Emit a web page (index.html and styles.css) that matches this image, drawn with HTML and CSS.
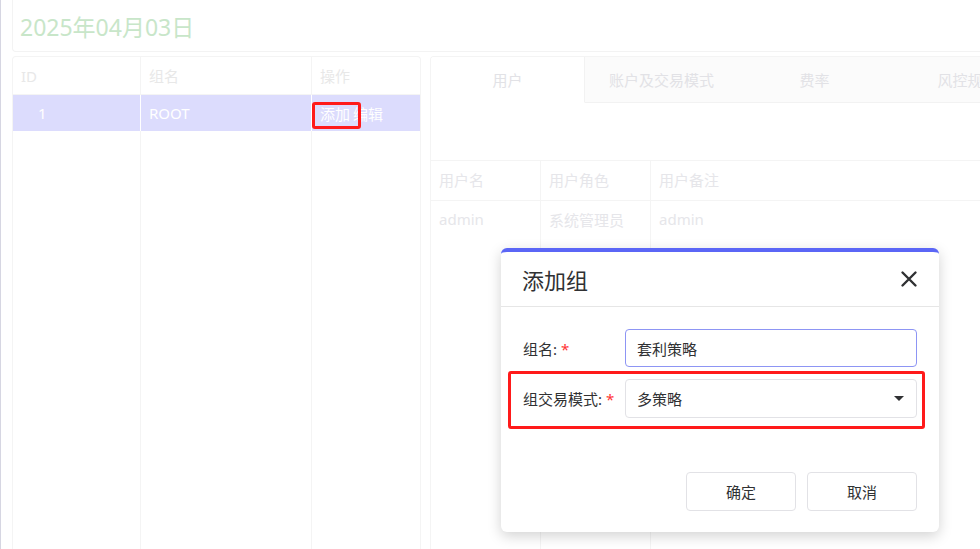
FILE: index.html
```html
<!DOCTYPE html>
<html>
<head>
    <meta charset="utf-8">
    <link rel="stylesheet" href="styles.css">
</head>
<body>
    <div class="page">
        <div class="date-card">2025年04月03日</div>

        <div class="panels">
            <div class="group-panel">
                <div class="grid-row grid-head">
                    <div class="cell cell-id">ID</div>
                    <div class="cell cell-name">组名</div>
                    <div class="cell cell-op">操作</div>
                </div>
                <div class="grid-row grid-selected">
                    <div class="cell cell-id cell-num">1</div>
                    <div class="cell cell-name">ROOT</div>
                    <div class="cell cell-op">
                        <span class="op-link">添加</span><span class="op-link">编辑</span>
                        <span class="mark mark-add"></span>
                    </div>
                </div>
                <div class="grid-row grid-fill">
                    <div class="cell cell-id"></div>
                    <div class="cell cell-name"></div>
                    <div class="cell cell-op"></div>
                </div>
            </div>

            <div class="detail-panel">
                <div class="tabs">
                    <div class="tab tab-active">用户</div>
                    <div class="tab">账户及交易模式</div>
                    <div class="tab">费率</div>
                    <div class="tab">风控规则</div>
                </div>
                <div class="tab-body">
                    <div class="user-row user-head">
                        <div class="ucell">用户名</div>
                        <div class="ucell">用户角色</div>
                        <div class="ucell ucell-last">用户备注</div>
                    </div>
                    <div class="user-row">
                        <div class="ucell">admin</div>
                        <div class="ucell">系统管理员</div>
                        <div class="ucell ucell-last">admin</div>
                    </div>
                    <div class="user-row user-fill">
                        <div class="ucell"></div>
                        <div class="ucell"></div>
                        <div class="ucell ucell-last"></div>
                    </div>
                </div>
            </div>
        </div>
    </div>

    <div class="modal">
        <div class="modal-header">
            <span class="modal-title">添加组</span>
            <svg class="modal-close" width="18" height="18" viewBox="0 0 18 18">
                <path d="M2.5 2.5 L15.5 15.5 M15.5 2.5 L2.5 15.5" stroke="#303133" stroke-width="2.4" stroke-linecap="round"/>
            </svg>
        </div>
        <div class="modal-body">
            <div class="form-row">
                <label class="form-label">组名: <span class="req">*</span></label>
                <div class="form-input form-input-focus">套利策略</div>
            </div>
            <div class="form-row">
                <label class="form-label">组交易模式: <span class="req">*</span></label>
                <div class="form-input form-select">
                    <span>多策略</span>
                    <span class="caret"></span>
                </div>
                <span class="mark mark-mode"></span>
            </div>
        </div>
        <div class="modal-footer">
            <button class="btn">确定</button>
            <button class="btn">取消</button>
        </div>
    </div>
</body>
</html>
```

FILE: styles.css
```css
html, body {
    height: 100%;
}

body {
    margin: 0;
    font-family: "Noto Sans", "Noto Sans CJK SC", sans-serif;
    font-size: 15px;
    background: #fff;
    border-left: 1px solid #d6d6e2;
    overflow: hidden;
    position: relative;
}

.page {
    padding-left: 11px;
    height: 100%;
    display: flex;
    flex-direction: column;
}

.date-card {
    height: 58px;
    flex-shrink: 0;
    margin-top: -6px;
    padding: 6px 0 0 7px;
    box-sizing: border-box;
    display: flex;
    align-items: center;
    font-size: 23px;
    color: #c8e6c9;
    border: 1px solid #f3f3f3;
    border-right: none;
    border-radius: 0 0 0 4px;
}

.panels {
    flex: 1;
    display: flex;
    gap: 9px;
    margin-top: 4px;
    min-height: 0;
}

/* left: group grid */
.group-panel {
    width: 409px;
    flex-shrink: 0;
    display: flex;
    flex-direction: column;
    border: 1px solid #f4f4f4;
    border-bottom: none;
    border-radius: 4px 4px 0 0;
    box-sizing: border-box;
}

.grid-row {
    display: flex;
}

.grid-head {
    height: 37px;
    color: #e8e8e8;
    border-bottom: 1px solid #f4f4f4;
}

.grid-selected {
    height: 36px;
    background: #dcdcfd;
    color: #fff;
}

.grid-fill {
    flex: 1;
}

.cell {
    display: flex;
    align-items: center;
    padding-left: 8px;
    box-sizing: border-box;
    border-right: 1px solid #f4f4f4;
    white-space: nowrap;
}

.cell-id {
    width: 128px;
}

.cell-num {
    padding-left: 25px;
}

.cell-name {
    width: 171px;
}

.cell-op {
    flex: 1;
    border-right: none;
    position: relative;
}

.grid-selected .cell {
    border-right-color: #fff;
}

.op-link + .op-link {
    margin-left: 3px;
}

.mark {
    position: absolute;
    border: 3px solid #ff1a1a;
    border-radius: 3px;
    box-sizing: border-box;
}

.mark-add {
    left: 0;
    top: 7px;
    width: 49px;
    height: 27px;
}

/* right: tabs + user grid */
.detail-panel {
    flex: 1;
    display: flex;
    flex-direction: column;
    border-left: 1px solid #f4f4f4;
    border-top: 1px solid #f4f4f4;
    border-radius: 4px 0 0 0;
    overflow: hidden;
}

.tabs {
    display: flex;
    height: 46px;
}

.tab {
    width: 153px;
    flex-shrink: 0;
    display: flex;
    align-items: center;
    justify-content: center;
    color: #e2e2e6;
    background: #fbfbfb;
    border-bottom: 1px solid #f2f2f2;
    white-space: nowrap;
}

.tab-active {
    background: #fff;
    border-bottom-color: transparent;
    border-right: 1px solid #f2f2f2;
}

.tab-body {
    flex: 1;
    padding-top: 57px;
    display: flex;
    flex-direction: column;
}

.user-row {
    display: flex;
    height: 39px;
    color: #e6e6ea;
}

.user-head {
    border-top: 1px solid #f4f4f4;
    border-bottom: 1px solid #f4f4f4;
}

.user-fill {
    flex: 1;
}

.ucell {
    width: 110px;
    padding-left: 8px;
    padding-bottom: 3px;
    box-sizing: border-box;
    display: flex;
    align-items: center;
    border-right: 1px solid #f4f4f4;
}

.user-fill .ucell {
    padding-bottom: 0;
}

.ucell-last {
    flex: 1;
    border-right: none;
}

/* dialog */
.modal {
    position: absolute;
    left: 500px;
    top: 248px;
    width: 438px;
    height: 284px;
    background: #fff;
    border-top: 4px solid #5b66f6;
    border-radius: 6px;
    box-sizing: border-box;
    box-shadow: 0 4px 14px rgba(0, 0, 0, 0.18);
    display: flex;
    flex-direction: column;
}

.modal-header {
    height: 54px;
    padding: 0 22px;
    display: flex;
    align-items: center;
    justify-content: space-between;
    border-bottom: 1px solid #e6e6e6;
    flex-shrink: 0;
}

.modal-title {
    font-size: 22px;
    color: #303133;
    margin-left: -1px;
}

.modal-close {
    margin-right: -1px;
}

.modal-body {
    padding: 22px 22px 0 22px;
    display: flex;
    flex-direction: column;
    gap: 12px;
}

.form-row {
    display: flex;
    align-items: center;
    position: relative;
}

.form-label {
    width: 102px;
    flex-shrink: 0;
    color: #303133;
}

.req {
    color: #f33;
}

.form-input {
    flex: 1;
    height: 39px;
    box-sizing: border-box;
    border: 1px solid #e2e2e6;
    border-radius: 4px;
    padding: 0 11px;
    display: flex;
    align-items: center;
    color: #303133;
}

.form-input-focus {
    height: 38px;
    border-color: #8d95f4;
}

.form-select {
    justify-content: space-between;
}

.caret {
    width: 0;
    height: 0;
    border-left: 5px solid transparent;
    border-right: 5px solid transparent;
    border-top: 5px solid #303133;
    margin-right: 1px;
}

.mark-mode {
    left: -15px;
    right: -8px;
    top: -8px;
    bottom: -11px;
}

.modal-footer {
    margin-top: auto;
    padding: 0 22px 21px 0;
    display: flex;
    justify-content: flex-end;
    gap: 11px;
}

.btn {
    width: 110px;
    height: 39px;
    background: #fff;
    border: 1px solid #e2e2e6;
    border-radius: 4px;
    font-family: inherit;
    font-size: 15px;
    color: #303133;
}
```
